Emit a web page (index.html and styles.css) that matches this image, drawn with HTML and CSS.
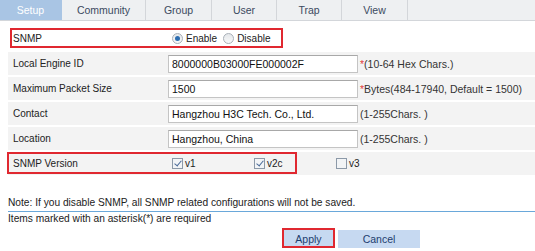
FILE: index.html
```html
<html>

<head>
  <link rel="stylesheet" href="styles.css">
</head>

<body>
  <div id="tabs">
    <a href="#" class="tab active" style="width: 62px">Setup</a>
    <a href="#" class="tab" style="width: 84px">Community</a>
    <a href="#" class="tab" style="width: 66px">Group</a>
    <a href="#" class="tab" style="width: 65px">User</a>
    <a href="#" class="tab" style="width: 65px">Trap</a>
    <a href="#" class="tab" style="width: 66px">View</a>
  </div>

  <div id="form">
    <div class="row plain">
      <span class="label">SNMP</span>
      <span class="field">
        <label class="radio"><span class="dot on"></span>Enable</label>
        <label class="radio"><span class="dot"></span>Disable</label>
      </span>
      <span class="mark snmpMark"></span>
    </div>

    <div class="row">
      <span class="label">Local Engine ID</span>
      <span class="field"><input class="text" type="text" value="8000000B03000FE000002F"></span>
      <span class="hint"><span class="star">*</span>(10-64 Hex Chars.)</span>
    </div>

    <div class="row">
      <span class="label">Maximum Packet Size</span>
      <span class="field"><input class="text" type="text" value="1500"></span>
      <span class="hint"><span class="star">*</span>Bytes(484-17940, Default = 1500)</span>
    </div>

    <div class="row">
      <span class="label">Contact</span>
      <span class="field"><input class="text" type="text" value="Hangzhou H3C Tech. Co., Ltd."></span>
      <span class="hint">(1-255Chars. )</span>
    </div>

    <div class="row">
      <span class="label">Location</span>
      <span class="field"><input class="text" type="text" value="Hangzhou, China"></span>
      <span class="hint">(1-255Chars. )</span>
    </div>

    <div class="row">
      <span class="label">SNMP Version</span>
      <span class="field checks">
        <label class="check"><span class="box on"></span>v1</label>
        <label class="check"><span class="box on"></span>v2c</label>
        <label class="check"><span class="box"></span>v3</label>
      </span>
      <span class="mark versionMark"></span>
    </div>
  </div>

  <div id="note">Note: If you disable SNMP, all SNMP related configurations will not be saved.</div>
  <div id="required">Items marked with an asterisk(*) are required</div>

  <div id="buttons">
    <span class="btnWrap">
      <a href="#" class="btn" style="width: 49px">Apply</a>
      <span class="mark applyMark"></span>
    </span>
    <a href="#" class="btn" style="width: 82px">Cancel</a>
  </div>
</body>

</html>
```

FILE: styles.css
```css
body {
  margin: 0;
  color: #222222;
  font-family: "Liberation Sans", Arial, sans-serif;
  font-size: 10px;
  background: #ffffff;
}

#tabs {
  display: flex;
  height: 20px;
  background: #eef0f2;
  border-bottom: 1px solid #d3d6da;
}

.tab {
  display: flex;
  align-items: center;
  justify-content: center;
  box-sizing: border-box;
  border-right: 1px solid #d3d6da;
  color: #3b4a60;
  text-decoration: none;
  font-size: 10.5px;
}

.tab.active {
  background: #a9c5e4;
  color: #ffffff;
  border-right-color: #a9c5e4;
}

#form {
  margin: 6px 0 0 8px;
}

.row {
  position: relative;
  display: grid;
  grid-template-columns: 155px 192px auto;
  align-items: center;
  height: 23px;
  padding-left: 5px;
  margin-bottom: 2px;
  background: #f3f3f3;
}

.row.plain {
  background: #ffffff;
}

.field {
  display: flex;
  align-items: center;
}

.text {
  width: 190px;
  height: 18px;
  box-sizing: border-box;
  padding: 1px 3px 0 3px;
  border: 1px solid #c4c4c4;
  border-top-color: #a8a8a8;
  font-family: "Liberation Sans", Arial, sans-serif;
  font-size: 10.5px;
  color: #111111;
}

.hint {
  color: #333333;
  font-size: 10.5px;
}

.star {
  color: #e23b3b;
}

.radio {
  display: flex;
  align-items: center;
  margin-left: 4px;
  margin-right: 2px;
}

.dot {
  width: 9px;
  height: 9px;
  border-radius: 50%;
  border: 1px solid #a9b0b8;
  background: linear-gradient(to bottom, #e4e7ea, #f8f9fa);
  margin-right: 3px;
  position: relative;
}

.dot.on::after {
  content: "";
  position: absolute;
  left: 2px;
  top: 2px;
  width: 5px;
  height: 5px;
  border-radius: 50%;
  background: #2c6db0;
}

.checks {
  grid-column: 2 / 4;
}

.checks .check {
  display: flex;
  align-items: center;
  flex: none;
  width: 78px;
  margin-left: 4px;
}

.box {
  width: 9px;
  height: 9px;
  border: 1px solid #8c99a8;
  background: #f2f4f6;
  margin-right: 2px;
  position: relative;
}

.box.on::after {
  content: "";
  position: absolute;
  left: 3px;
  top: 0px;
  width: 3px;
  height: 6px;
  border: solid #4a6a98;
  border-width: 0 1.5px 1.5px 0;
  transform: rotate(40deg);
}

.mark {
  position: absolute;
  box-sizing: border-box;
  border: 2px solid #e02830;
}

.snmpMark {
  left: 2px;
  top: 1px;
  width: 273px;
  height: 20px;
}

.versionMark {
  left: -1px;
  top: 0;
  width: 290px;
  height: 22px;
}

#note {
  margin: 21px 0 0 8px;
  height: 15px;
  line-height: 14px;
  border-bottom: 1px solid #6aa8da;
  font-size: 10.2px;
  color: #222222;
}

#required {
  margin-left: 8px;
  line-height: 14px;
  font-size: 10.2px;
}

#buttons {
  display: flex;
  gap: 5px;
  margin: 4px 0 0 284px;
}

.btnWrap {
  position: relative;
  display: flex;
}

.btn {
  display: flex;
  align-items: center;
  justify-content: center;
  height: 18px;
  background: #c6d9f1;
  color: #1d3d6e;
  text-decoration: none;
  font-size: 10.5px;
}

.applyMark {
  left: -2px;
  top: -2px;
  width: 53px;
  height: 20px;
}
```
